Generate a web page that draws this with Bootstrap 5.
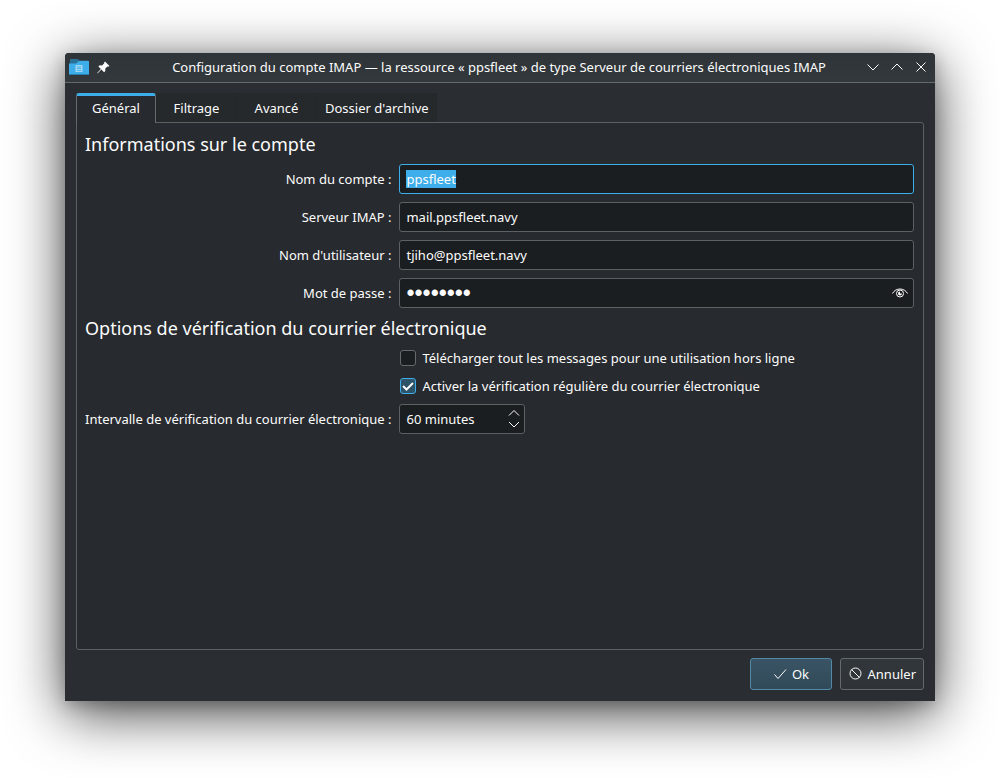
<!DOCTYPE html>
<html lang="fr">
<head>
<meta charset="utf-8">
<meta name="viewport" content="width=device-width, initial-scale=1">
<title>Configuration du compte IMAP</title>
<link href="https://cdn.jsdelivr.net/npm/bootstrap@5.3.0/dist/css/bootstrap.min.css" rel="stylesheet">
<style>
  body { font: 13px/18px "Noto Sans", sans-serif; color: #fcfcfc; background: #fff; padding: 53px 65px 77px; }
  svg { display: block; flex: none; }
  .dialog { background: #2a2e32; border-radius: 4px 4px 0 0; box-shadow: 0 12px 56px rgba(0,0,0,.75), 0 4px 16px rgba(0,0,0,.2); }
  .titlebar { height: 30px; background: linear-gradient(#2f3438, #33383c); border-bottom: 1px solid #656a6c; border-radius: 4px 4px 0 0; padding: 0 6px 1px 4px; }
  .titlebar h1 { font-size: 13px; line-height: 18px; }
  .bar-side { flex: 1 1 0; }
  .plain-btn { background: none; border: 0; padding: 0; color: inherit; }
  .dialog-body { padding: 10px 11px 11px; }
  .nav-tabs { border: 0; }
  .nav-tabs .nav-link { height: 29px; min-width: 80px; margin: 0; padding: 0 8px; border: 0; border-left: 1px solid #23272a; border-radius: 0; background: #26292c; color: #fcfcfc; }
  .nav-tabs .nav-link.active { height: 30px; margin-bottom: -1px; padding-bottom: 3px; border: 1px solid #656a6c; border-top: 3px solid #3daee9; border-bottom: 0; border-radius: 3px 3px 0 0; background: #272a2e; color: #fcfcfc; position: relative; }
  .panel { background: #272a2e; border: 1px solid #5d6163; border-radius: 0 3px 3px 3px; padding: 9px 9px 9px 8px; }
  h2 { font-size: 18px; line-height: 24px; font-weight: 400; margin: 0; }
  .fields { display: grid; grid-template-columns: max-content 1fr; gap: 8px; align-items: center; }
  .fields > label { text-align: right; }
  .section-row { grid-column: 1 / -1; }
  .form-control { height: 30px; padding: 0 6px; font-size: 13px; line-height: 18px; color: #fcfcfc; background: #1b1e20; border: 1px solid #5d6163; border-radius: 3px; }
  .form-control:focus { color: #fcfcfc; background: #1b1e20; border-color: #3daee9; box-shadow: none; }
  .form-control::selection { background: #3daee9; color: #fcfcfc; }
  .form-control[type=password] { font-family: "Liberation Sans", sans-serif; font-size: 23px; }
  .field-box { position: relative; }
  .reveal { position: absolute; right: 6px; top: 7px; }
  .spin { width: 126px; }
  .steps { position: absolute; right: 5px; top: 5px; gap: 4px; }
  .form-check { padding: 0; margin: 0; min-height: 0; display: flex; align-items: center; gap: 6px; height: 20px; }
  .form-check .form-check-input { float: none; margin: 0; width: 16px; height: 16px; background-color: #1b1e20; border: 1px solid #656a6c; border-radius: 3px; }
  .form-check .form-check-input:checked { background-color: #2c5368; border-color: #3daee9; background-size: 14px 14px; background-image: url("data:image/svg+xml,%3Csvg xmlns='http://www.w3.org/2000/svg' viewBox='0 0 14 14'%3E%3Cpath d='M2 7l3.500 3.500L12 4' fill='none' stroke='%23fcfcfc' stroke-width='2'/%3E%3C/svg%3E"); }
  .checks { grid-column: 2; padding-left: 1px; gap: 8px; }
  .dialog .btn { height: 32px; padding: 0 7px; font-size: 13px; line-height: 18px; color: #fcfcfc; border: 1px solid #656a6c; border-radius: 3px; background: linear-gradient(#32373b, #2f3337); }
  .dialog .btn-ok { width: 82px; border-color: #508aa8; background: linear-gradient(#3a5465, #314a59); }
</style>
</head>
<body class="d-flex flex-column min-vh-100">
<main class="dialog d-flex flex-column flex-grow-1">
  <header class="titlebar d-flex align-items-center">
    <div class="bar-side d-flex align-items-center gap-2">
      <svg width="20" height="16" viewBox="0 0 20 16"><path d="M1 0h8l1.500 1.500H19V6H1z" fill="#2a7196"/><path d="M0 4.500h7L10 2h10v14H0z" fill="#3daee9"/><path d="M0 15h20v1H0z" fill="#2980b0"/><path d="M6.500 6h7v7h-7z" fill="#9ed6f4"/><path d="M8 8h4M8 9.500h4M8 11.500h4" stroke="#3daee9" stroke-width=".8"/></svg>
      <button class="plain-btn" aria-label="Épingler"><svg width="13" height="13" viewBox="0 0 13 13" fill="#fcfcfc"><path d="M8 .5 12.500 5l-1.300.8-.9-.2-2.100 2.200.1 2.300-1.200 1.200-2.700-2.700L1 12l-.9.600L.6 11.500l3.300-3.400L1.400 5.500l1.300-1.200 2.300.1 2.300-2.100L7.100 1.400z"/></svg></button>
    </div>
    <h1 class="m-0 fw-normal text-nowrap">Configuration du compte IMAP — la ressource « ppsfleet » de type Serveur de courriers électroniques IMAP</h1>
    <div class="bar-side d-flex justify-content-end gap-2">
      <button class="plain-btn" aria-label="Réduire"><svg width="16" height="16" viewBox="0 0 16 16" fill="none" stroke="#fcfcfc"><path d="M2.500 5.500 8 11l5.500-5.500"/></svg></button>
      <button class="plain-btn" aria-label="Agrandir"><svg width="16" height="16" viewBox="0 0 16 16" fill="none" stroke="#fcfcfc"><path d="M2.500 10.500 8 5l5.500 5.500"/></svg></button>
      <button class="plain-btn" aria-label="Fermer"><svg width="16" height="16" viewBox="0 0 16 16" fill="none" stroke="#fcfcfc"><path d="m3.500 3.500 9 9m0-9-9 9"/></svg></button>
    </div>
  </header>

  <div class="dialog-body d-flex flex-column flex-grow-1 gap-2">
    <div class="d-flex flex-column flex-grow-1">
      <ul class="nav nav-tabs" role="tablist">
        <li class="nav-item"><button class="nav-link active" role="tab" aria-selected="true">Général</button></li>
        <li class="nav-item"><button class="nav-link" role="tab">Filtrage</button></li>
        <li class="nav-item"><button class="nav-link" role="tab">Avancé</button></li>
        <li class="nav-item"><button class="nav-link" role="tab">Dossier d'archive</button></li>
      </ul>
      <form class="panel flex-grow-1" id="account">
        <h2>Informations sur le compte</h2>
        <div class="fields mt-2">
          <label for="name">Nom du compte :</label>
          <input class="form-control" id="name" value="ppsfleet" autofocus spellcheck="false">
          <label for="server">Serveur IMAP :</label>
          <input class="form-control" id="server" value="mail.ppsfleet.navy">
          <label for="user">Nom d'utilisateur :</label>
          <input class="form-control" id="user" value="tjiho@ppsfleet.navy">
          <label for="pass">Mot de passe :</label>
          <div class="field-box">
            <input class="form-control" id="pass" type="password" value="12345678">
            <button type="button" class="plain-btn reveal" aria-label="Afficher le mot de passe"><svg width="16" height="16" viewBox="0 0 16 16" fill="none" stroke="#fcfcfc"><path d="M.5 8.500C2 5.500 5 4 8 4s6 1.500 7.500 4.500"/><circle cx="8" cy="8.500" r="3.500"/><path d="M8 6.500a2 2 0 1 0 2 2H8z" fill="#fcfcfc" stroke="none"/></svg></button>
          </div>
          <h2 class="section-row">Options de vérification du courrier électronique</h2>
          <div class="checks d-flex flex-column">
            <div class="form-check"><input class="form-check-input" type="checkbox" id="offline"><label for="offline">Télécharger tout les messages pour une utilisation hors ligne</label></div>
            <div class="form-check"><input class="form-check-input" type="checkbox" id="regular" checked><label for="regular">Activer la vérification régulière du courrier électronique</label></div>
          </div>
          <label for="interval">Intervalle de vérification du courrier électronique :</label>
          <div class="field-box spin">
            <input class="form-control" id="interval" role="spinbutton" aria-valuenow="60" value="60 minutes">
            <div class="steps d-flex flex-column">
              <button type="button" class="plain-btn" aria-label="Augmenter"><svg width="12" height="8" viewBox="0 0 12 8" fill="none" stroke="#fcfcfc"><path d="m1 6.500 5-5 5 5"/></svg></button>
              <button type="button" class="plain-btn" aria-label="Diminuer"><svg width="12" height="8" viewBox="0 0 12 8" fill="none" stroke="#fcfcfc"><path d="m1 1 5 5 5-5"/></svg></button>
            </div>
          </div>
        </div>
      </form>
    </div>
    <footer class="d-flex justify-content-end gap-2">
      <button class="btn btn-ok d-flex align-items-center justify-content-center gap-1" type="submit" form="account"><svg width="16" height="16" viewBox="0 0 16 16" fill="none" stroke="#fcfcfc"><path d="m2.500 8.500 3.500 4 8-9"/></svg>Ok</button>
      <button class="btn d-flex align-items-center gap-1" type="button"><svg width="16" height="16" viewBox="0 0 16 16" fill="none" stroke="#fcfcfc"><circle cx="7.500" cy="7.500" r="5.500"/><path d="m3.500 3.500 8 8"/></svg>Annuler</button>
    </footer>
  </div>
</main>
<script src="https://cdn.jsdelivr.net/npm/bootstrap@5.3.0/dist/js/bootstrap.bundle.min.js"></script>
<script>
  const nameField = document.getElementById('name');
  nameField.focus();
  nameField.select();
</script>
</body>
</html>
